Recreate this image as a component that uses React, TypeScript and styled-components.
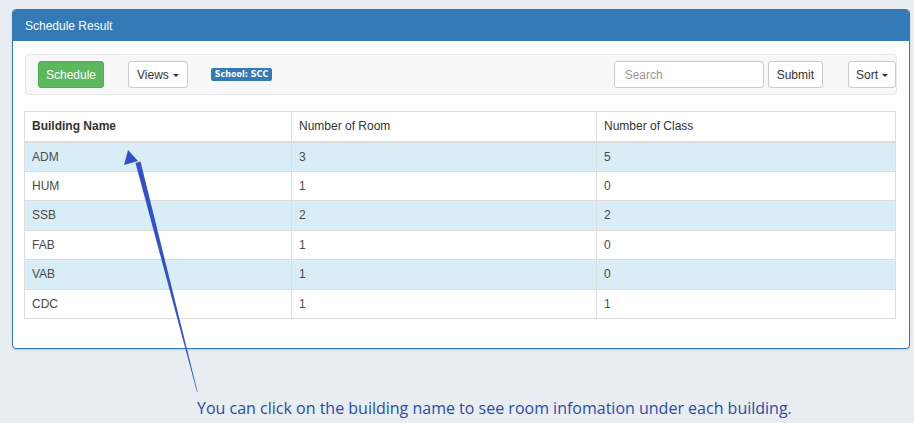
import styled, { createGlobalStyle } from 'styled-components';

interface BuildingRow {
  name: string;
  rooms: number;
  classes: number;
}

const buildings: BuildingRow[] = [
  { name: 'ADM', rooms: 3, classes: 5 },
  { name: 'HUM', rooms: 1, classes: 0 },
  { name: 'SSB', rooms: 2, classes: 2 },
  { name: 'FAB', rooms: 1, classes: 0 },
  { name: 'VAB', rooms: 1, classes: 0 },
  { name: 'CDC', rooms: 1, classes: 1 },
];

const GlobalStyle = createGlobalStyle`
  html, body {
    margin: 0;
    padding: 0;
    background: #e8edf1;
    font-family: 'Liberation Sans', Arial, sans-serif;
    color: #333;
  }
  * { box-sizing: border-box; }
`;

const Page = styled.div`
  position: relative;
  width: 914px;
  height: 423px;
  padding: 9px 4px 0 12px;
  overflow: hidden;
`;

const Panel = styled.div`
  background: #fff;
  border: 1px solid #337ab7;
  border-radius: 4px;
  box-shadow: 0 1px 2px rgba(0, 0, 0, 0.15);
`;

const PanelHeading = styled.div`
  height: 31px;
  display: flex;
  align-items: center;
  padding: 0 12px;
  background: #337ab7;
  color: #fff;
  font-size: 12px;
  border-radius: 3px 3px 0 0;
`;

const PanelBody = styled.div`
  padding: 13px 12px 29px;
`;

const Toolbar = styled.div`
  height: 41px;
  display: flex;
  align-items: center;
  padding: 0 0 0 12px;
  background: #f8f8f8;
  border: 1px solid #e7e7e7;
  border-radius: 4px;
  margin-bottom: 16px;
`;

const Button = styled.button<{ $variant?: 'success' | 'default'; $pad?: number }>`
  height: 27px;
  padding: 0 ${(p) => p.$pad ?? 8}px;
  font-family: inherit;
  font-size: 12px;
  border-radius: 3px;
  display: inline-flex;
  align-items: center;
  gap: 4px;
  cursor: pointer;
  color: ${(p) => (p.$variant === 'success' ? '#fff' : '#333')};
  background: ${(p) => (p.$variant === 'success' ? '#5cb85c' : '#fff')};
  border: 1px solid ${(p) => (p.$variant === 'success' ? '#4cae4c' : '#ccc')};
`;

const Caret = styled.span`
  display: inline-block;
  width: 0;
  height: 0;
  margin-top: 1px;
  border-top: 3px solid #333;
  border-left: 3px solid transparent;
  border-right: 3px solid transparent;
`;

const Label = styled.span`
  margin-left: 23px;
  background: #337ab7;
  color: #fff;
  font-family: 'DejaVu Sans', sans-serif;
  font-weight: bold;
  font-size: 8px;
  line-height: 9px;
  padding: 2px 4px;
  border-radius: 2px;
`;

const Spacer = styled.div`
  flex: 1;
`;

const SearchInput = styled.input`
  width: 150px;
  height: 27px;
  padding: 0 10px;
  font-family: inherit;
  font-size: 12px;
  border: 1px solid #ccc;
  border-radius: 3px;
  &::placeholder { color: #999; }
`;

const SearchGroup = styled.div`
  display: flex;
  gap: 4px;
  margin-right: 25px;
`;

const Table = styled.table`
  width: 100%;
  margin-left: -1px;
  border-collapse: collapse;
  font-size: 12px;
  border: 1px solid #ddd;
`;

const HeadCell = styled.th`
  height: 30px;
  padding: 0 7px;
  text-align: left;
  font-weight: bold;
  border: 1px solid #ddd;
  border-bottom-width: 2px;
  &:first-child { width: 267px; }
  &:nth-child(2) { width: 305px; }
`;

const HeadCellLight = styled(HeadCell)`
  font-weight: normal;
`;

const Row = styled.tr<{ $striped: boolean }>`
  background: ${(p) => (p.$striped ? '#d9edf7' : '#fff')};
`;

const Cell = styled.td`
  height: 29.5px;
  padding: 0 7px;
  border: 1px solid #ddd;
  color: #4a4a4a;
`;

const Note = styled.div`
  margin-top: 48px;
  padding-left: 185px;
  font-family: 'Open Sans', sans-serif;
  font-size: 16px;
  color: #2b4ca8;
`;

const ArrowLayer = styled.svg`
  position: absolute;
  left: 0;
  top: 0;
  pointer-events: none;
`;

export default function App() {
  return (
    <>
      <GlobalStyle />
      <Page>
        <Panel>
          <PanelHeading>Schedule Result</PanelHeading>
          <PanelBody>
            <Toolbar>
              <Button $variant="success" $pad={7}>Schedule</Button>
              <Button style={{ marginLeft: 24 }}>
                Views <Caret />
              </Button>
              <Label>School: SCC</Label>
              <Spacer />
              <SearchGroup>
                <SearchInput placeholder="Search" />
                <Button>Submit</Button>
              </SearchGroup>
              <Button $pad={7}>
                Sort <Caret />
              </Button>
            </Toolbar>
            <Table>
              <thead>
                <tr>
                  <HeadCell>Building Name</HeadCell>
                  <HeadCellLight>Number of Room</HeadCellLight>
                  <HeadCellLight>Number of Class</HeadCellLight>
                </tr>
              </thead>
              <tbody>
                {buildings.map((b, i) => (
                  <Row key={b.name} $striped={i % 2 === 0}>
                    <Cell>{b.name}</Cell>
                    <Cell>{b.rooms}</Cell>
                    <Cell>{b.classes}</Cell>
                  </Row>
                ))}
              </tbody>
            </Table>
          </PanelBody>
        </Panel>
        <Note>You can click on the building name to see room infomation under each building.</Note>
        <ArrowLayer width="914" height="423" viewBox="0 0 914 423">
          <polygon points="135.5,163 140.5,161.5 197.6,392 197,392" fill="#3051c9" />
          <polygon points="128,150 124,165 138,161" fill="#3051c9" />
        </ArrowLayer>
      </Page>
    </>
  );
}
